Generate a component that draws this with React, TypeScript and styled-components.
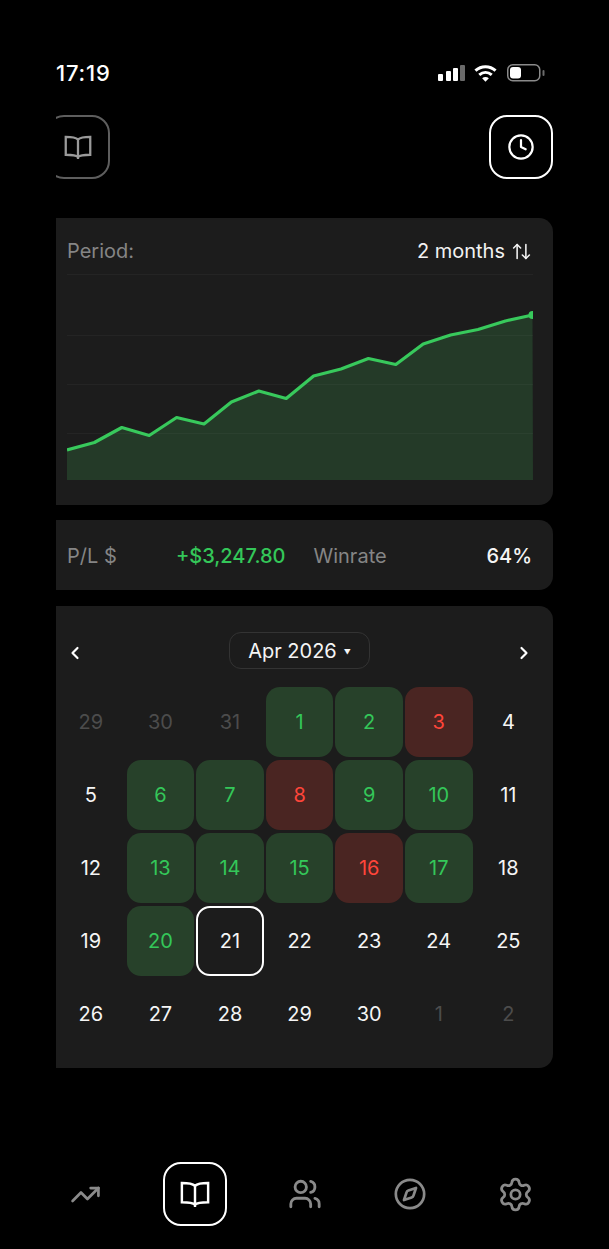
import React from "react";
import styled, { createGlobalStyle } from "styled-components";
import { ArrowUpDown, ChevronLeft, ChevronRight, Clock, Compass, Settings, TrendingUp, Users } from "lucide-react";

const GlobalStyle = createGlobalStyle`
  html, body {
    margin: 0;
    padding: 0;
    background: #000;
  }
  body {
    font-family: Inter, "Noto Sans", sans-serif;
    color: #fff;
  }
`;

const Screen = styled.div`
  width: 609px;
  height: 1249px;
  overflow: hidden;
  display: flex;
  flex-direction: column;
  background: #000;
`;

const StatusBar = styled.div`
  height: 115px;
  box-sizing: border-box;
  padding: 60px 64px 0 56px;
  display: flex;
  justify-content: space-between;
  align-items: flex-start;
`;

const Time = styled.div`
  font-size: 22px;
  line-height: 26px;
  font-weight: 500;
  letter-spacing: 0.8px;
`;

const StatusIcons = styled.div`
  display: flex;
  align-items: center;
  gap: 9px;
  height: 26px;
`;

const Content = styled.div`
  margin-left: 56px;
  width: 497px;
  overflow: hidden;
  display: flex;
  flex-direction: column;
  flex: 1;
`;

const TopRow = styled.div`
  display: flex;
  justify-content: space-between;
  margin-left: -10px;
  margin-bottom: 39px;
`;

const SquareButton = styled.div<{ $active?: boolean }>`
  width: 64px;
  height: 64px;
  box-sizing: border-box;
  border-radius: 18px;
  border: 2px solid ${({ $active }) => ($active ? "#fff" : "#5e5e5e")};
  color: ${({ $active }) => ($active ? "#fff" : "#9a9a9a")};
  display: flex;
  align-items: center;
  justify-content: center;
  background: #000;
`;

const Card = styled.div`
  margin-left: -13px;
  background: #1c1c1c;
  border-radius: 14px;
`;

const ChartCard = styled(Card)`
  height: 287px;
  box-sizing: border-box;
  padding: 18px 21px 0 24px;
  margin-bottom: 15px;
`;

const PeriodRow = styled.div`
  display: flex;
  justify-content: space-between;
  align-items: center;
  height: 30px;
  font-size: 20px;
  margin-bottom: 8px;
`;

const Label = styled.span`
  font-size: 20px;
  color: #858585;
`;

const PeriodValue = styled.span`
  display: flex;
  align-items: center;
  gap: 6px;
  color: #f2f2f2;
`;

const ChartSvg = styled.svg`
  display: block;
`;

const StatsCard = styled(Card)`
  height: 70px;
  box-sizing: border-box;
  padding: 2px 21px 0 24px;
  margin-bottom: 16px;
  display: flex;
  align-items: center;
  gap: 28px;
  font-size: 20px;
`;

const StatPair = styled.div`
  flex: 1;
  display: flex;
  justify-content: space-between;
  align-items: center;
`;

const PlValue = styled.span`
  color: #34c759;
  font-weight: 500;
`;

const WinValue = styled.span`
  color: #f5f5f5;
  font-weight: 500;
`;

const CalendarCard = styled(Card)`
  height: 462px;
  box-sizing: border-box;
  padding: 26px 11px 0 14px;
`;

const CalendarHead = styled.div`
  display: flex;
  align-items: center;
  justify-content: space-between;
  padding: 0 6px 0 6px;
  margin-bottom: 18px;
`;

const NavButton = styled.div`
  width: 24px;
  height: 37px;
  display: flex;
  align-items: center;
  justify-content: center;
  color: #fff;
  padding-top: 5px;
  box-sizing: border-box;
`;

const MonthPill = styled.div`
  width: 141px;
  height: 37px;
  box-sizing: border-box;
  border: 1px solid #333;
  border-radius: 12px;
  display: flex;
  align-items: center;
  justify-content: center;
  gap: 7px;
  font-size: 20px;
  color: #f5f5f5;
`;

const Caret = styled.span`
  font-size: 7px;
  line-height: 1;
  padding-top: 3px;
`;

const DayGrid = styled.div`
  display: grid;
  grid-template-columns: repeat(7, 67.6px);
  grid-auto-rows: 70px;
  column-gap: 2px;
  row-gap: 3px;
`;

const toneStyles = {
  win: "background:#27412a; color:#34c759;",
  loss: "background:#4a2522; color:#ff453a;",
  plain: "color:#f5f5f5;",
  muted: "color:#4c4c4c;",
  today: "color:#f5f5f5; border:2px solid #fff;",
};

type Tone = keyof typeof toneStyles;

const Day = styled.div<{ $tone: Tone }>`
  box-sizing: border-box;
  border-radius: 14px;
  display: flex;
  align-items: center;
  justify-content: center;
  font-size: 20px;
  ${({ $tone }) => toneStyles[$tone]}
`;

const BottomNav = styled.div`
  height: 64px;
  margin: 0 0 23px 53px;
  display: grid;
  grid-template-columns: 110px 110px 105px 105px 64px;
  align-items: center;
`;

const NavSlot = styled.div`
  width: 64px;
  height: 64px;
  display: flex;
  align-items: center;
  justify-content: center;
  color: #8a8a8a;
`;

const BookIcon = ({ size }: { size: number }) => (
  <svg width={size} height={size * 0.88} viewBox="0 0 32 28" fill="none" stroke="currentColor" strokeWidth="2.6">
    <path d="M16 5C14 3.200 11 2 2 2v20.500c9 0 12 .6 14 2.500 2-1.900 5-2.500 14-2.500V2c-9 0-12 1.200-14 3Z" strokeLinejoin="miter" />
    <path d="M16 5v22" strokeLinecap="round" />
  </svg>
);

const SignalIcon = () => (
  <svg width="27" height="16" viewBox="0 0 27 16">
    <rect x="0" y="9" width="5" height="7" rx="1" fill="#fff" />
    <rect x="8" y="6" width="5" height="10" rx="1" fill="#fff" />
    <rect x="15" y="3" width="5" height="13" rx="1" fill="#fff" />
    <rect x="22" y="0" width="5" height="16" rx="1" fill="#6a6a6a" />
  </svg>
);

const WifiIcon = () => (
  <svg width="23" height="17" viewBox="0 0 24 17" fill="none" stroke="#fff" strokeWidth="3.100">
    <path d="M1.500 5.500C7.500 0 16.500 0 22.500 5.500" />
    <path d="M5.500 10C9.500 6.500 14.500 6.500 18.500 10" />
    <path d="M12 17 8.500 13.500C10.600 11.800 13.400 11.800 15.500 13.500Z" fill="#fff" stroke="none" />
  </svg>
);

const BatteryIcon = () => (
  <svg width="38" height="18" viewBox="0 0 38 18" style={{ marginLeft: 1 }}>
    <rect x="0.750" y="0.750" width="32" height="16" rx="5" fill="none" stroke="#8a8a8a" strokeWidth="1.500" />
    <rect x="3" y="3" width="11" height="11.500" rx="3" fill="#fff" />
    <rect x="35.500" y="6" width="2" height="6" rx="1" fill="#6a6a6a" />
  </svg>
);

const linePoints: [number, number][] = [
  [0, 176], [27.4, 168.500], [54.800, 153.500], [82.200, 161.500], [109.600, 143.500], [137, 150],
  [164.400, 128], [191.800, 117], [219.200, 124.500], [246.600, 102], [274, 95], [301.400, 84.500],
  [328.800, 90.500], [356.200, 70], [383.600, 61], [411, 55.500], [438.400, 47], [465.500, 41],
];

const line = linePoints.map(([x, y]) => `${x},${y}`).join(" ");

const EquityChart = () => (
  <ChartSvg width="466" height="206" viewBox="0 0 466 206">
    <polygon points={`0,206 ${line} 466,206`} fill="#243a28" />
    {[0.5, 61.5, 110.5, 159.5].map((y) => (
      <line key={y} x1="0" x2="466" y1={y} y2={y} stroke="#fff" strokeOpacity="0.035" strokeWidth="1" />
    ))}
    <polyline points={line} fill="none" stroke="#38c95c" strokeWidth="3.200" strokeLinejoin="round" />
    <circle cx="465.500" cy="41" r="4" fill="#38c95c" />
  </ChartSvg>
);

type Cell = { n: number; tone: Tone };

const tones: Record<number, Tone> = {
  1: "win", 2: "win", 3: "loss", 6: "win", 7: "win", 8: "loss", 9: "win", 10: "win",
  13: "win", 14: "win", 15: "win", 16: "loss", 17: "win", 20: "win", 21: "today",
};

const days: Cell[] = [
  { n: 29, tone: "muted" },
  { n: 30, tone: "muted" },
  { n: 31, tone: "muted" },
  ...Array.from({ length: 30 }, (_, i) => ({ n: i + 1, tone: tones[i + 1] ?? ("plain" as Tone) })),
  { n: 1, tone: "muted" },
  { n: 2, tone: "muted" },
];

export default function App() {
  return (
    <Screen>
      <GlobalStyle />
      <StatusBar>
        <Time>17:19</Time>
        <StatusIcons>
          <SignalIcon />
          <WifiIcon />
          <BatteryIcon />
        </StatusIcons>
      </StatusBar>
      <Content>
        <TopRow>
          <SquareButton>
            <BookIcon size={28} />
          </SquareButton>
          <SquareButton $active>
            <Clock size={28} strokeWidth={1.900} />
          </SquareButton>
        </TopRow>
        <ChartCard>
          <PeriodRow>
            <Label>Period:</Label>
            <PeriodValue>
              2 months <ArrowUpDown size={21} strokeWidth={1.800} />
            </PeriodValue>
          </PeriodRow>
          <EquityChart />
        </ChartCard>
        <StatsCard>
          <StatPair>
            <Label>P/L $</Label>
            <PlValue>+$3,247.80</PlValue>
          </StatPair>
          <StatPair>
            <Label>Winrate</Label>
            <WinValue>64%</WinValue>
          </StatPair>
        </StatsCard>
        <CalendarCard>
          <CalendarHead>
            <NavButton>
              <ChevronLeft size={20} strokeWidth={2.600} />
            </NavButton>
            <MonthPill>
              Apr 2026 <Caret>▼</Caret>
            </MonthPill>
            <NavButton>
              <ChevronRight size={20} strokeWidth={2.600} />
            </NavButton>
          </CalendarHead>
          <DayGrid>
            {days.map((d, i) => (
              <Day key={i} $tone={d.tone}>
                {d.n}
              </Day>
            ))}
          </DayGrid>
        </CalendarCard>
      </Content>
      <BottomNav>
        <NavSlot>
          <TrendingUp size={31} strokeWidth={2.100} />
        </NavSlot>
        <SquareButton $active>
          <BookIcon size={30} />
        </SquareButton>
        <NavSlot>
          <Users size={34} strokeWidth={2} />
        </NavSlot>
        <NavSlot>
          <Compass size={34} strokeWidth={1.900} />
        </NavSlot>
        <NavSlot>
          <Settings size={37} strokeWidth={1.800} />
        </NavSlot>
      </BottomNav>
    </Screen>
  );
}
